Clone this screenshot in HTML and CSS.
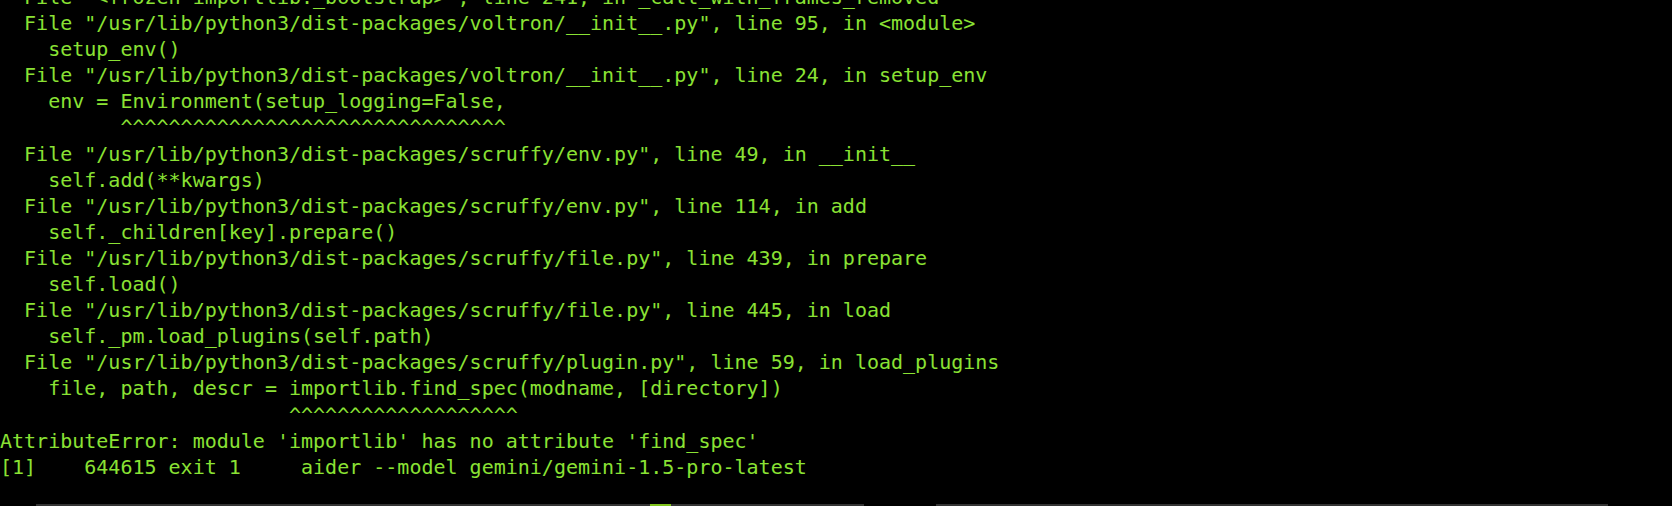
FILE: index.html
```html
<!DOCTYPE html>
<html lang="en">
<head>
<meta charset="utf-8">
<title>Terminal</title>
<link rel="stylesheet" href="styles.css">
</head>
<body>
<div class="term">
<pre class="output">  File "&lt;frozen importlib._bootstrap&gt;", line 241, in _call_with_frames_removed
  File "/usr/lib/python3/dist-packages/voltron/__init__.py", line 95, in &lt;module&gt;
    setup_env()
  File "/usr/lib/python3/dist-packages/voltron/__init__.py", line 24, in setup_env
    env = Environment(setup_logging=False,
          ^^^^^^^^^^^^^^^^^^^^^^^^^^^^^^^^
  File "/usr/lib/python3/dist-packages/scruffy/env.py", line 49, in __init__
    self.add(**kwargs)
  File "/usr/lib/python3/dist-packages/scruffy/env.py", line 114, in add
    self._children[key].prepare()
  File "/usr/lib/python3/dist-packages/scruffy/file.py", line 439, in prepare
    self.load()
  File "/usr/lib/python3/dist-packages/scruffy/file.py", line 445, in load
    self._pm.load_plugins(self.path)
  File "/usr/lib/python3/dist-packages/scruffy/plugin.py", line 59, in load_plugins
    file, path, descr = importlib.find_spec(modname, [directory])
                        ^^^^^^^^^^^^^^^^^^^
AttributeError: module 'importlib' has no attribute 'find_spec'
[1]    644615 exit 1     aider --model gemini/gemini-1.5-pro-latest</pre>
</div>
<div class="bar">
  <div class="seg seg-a"><span class="thumb"></span></div>
  <div class="seg seg-b"></div>
</div>
</body>
</html>
```
FILE: styles.css
```css
html, body {
  margin: 0;
  padding: 0;
  background: #000;
}
body {
  height: 506px;
  overflow: hidden;
  display: flex;
  flex-direction: column;
}
.term {
  flex: 1;
  overflow: hidden;
}
.output {
  margin: -16px 0 0 0;
  font-family: "DejaVu Sans Mono", "Liberation Mono", monospace;
  font-size: 20px;
  line-height: 26.1px;
  color: #8ae234;
  white-space: pre;
}
.bar {
  height: 2px;
  display: flex;
  padding-left: 36px;
  gap: 72px;
}
.seg {
  height: 2px;
  background: #333333;
  position: relative;
}
.seg-a {
  width: 828px;
}
.seg-b {
  width: 672px;
}
.thumb {
  position: absolute;
  left: 614px;
  top: 0;
  width: 21px;
  height: 2px;
  background: #7fc31c;
}
```
